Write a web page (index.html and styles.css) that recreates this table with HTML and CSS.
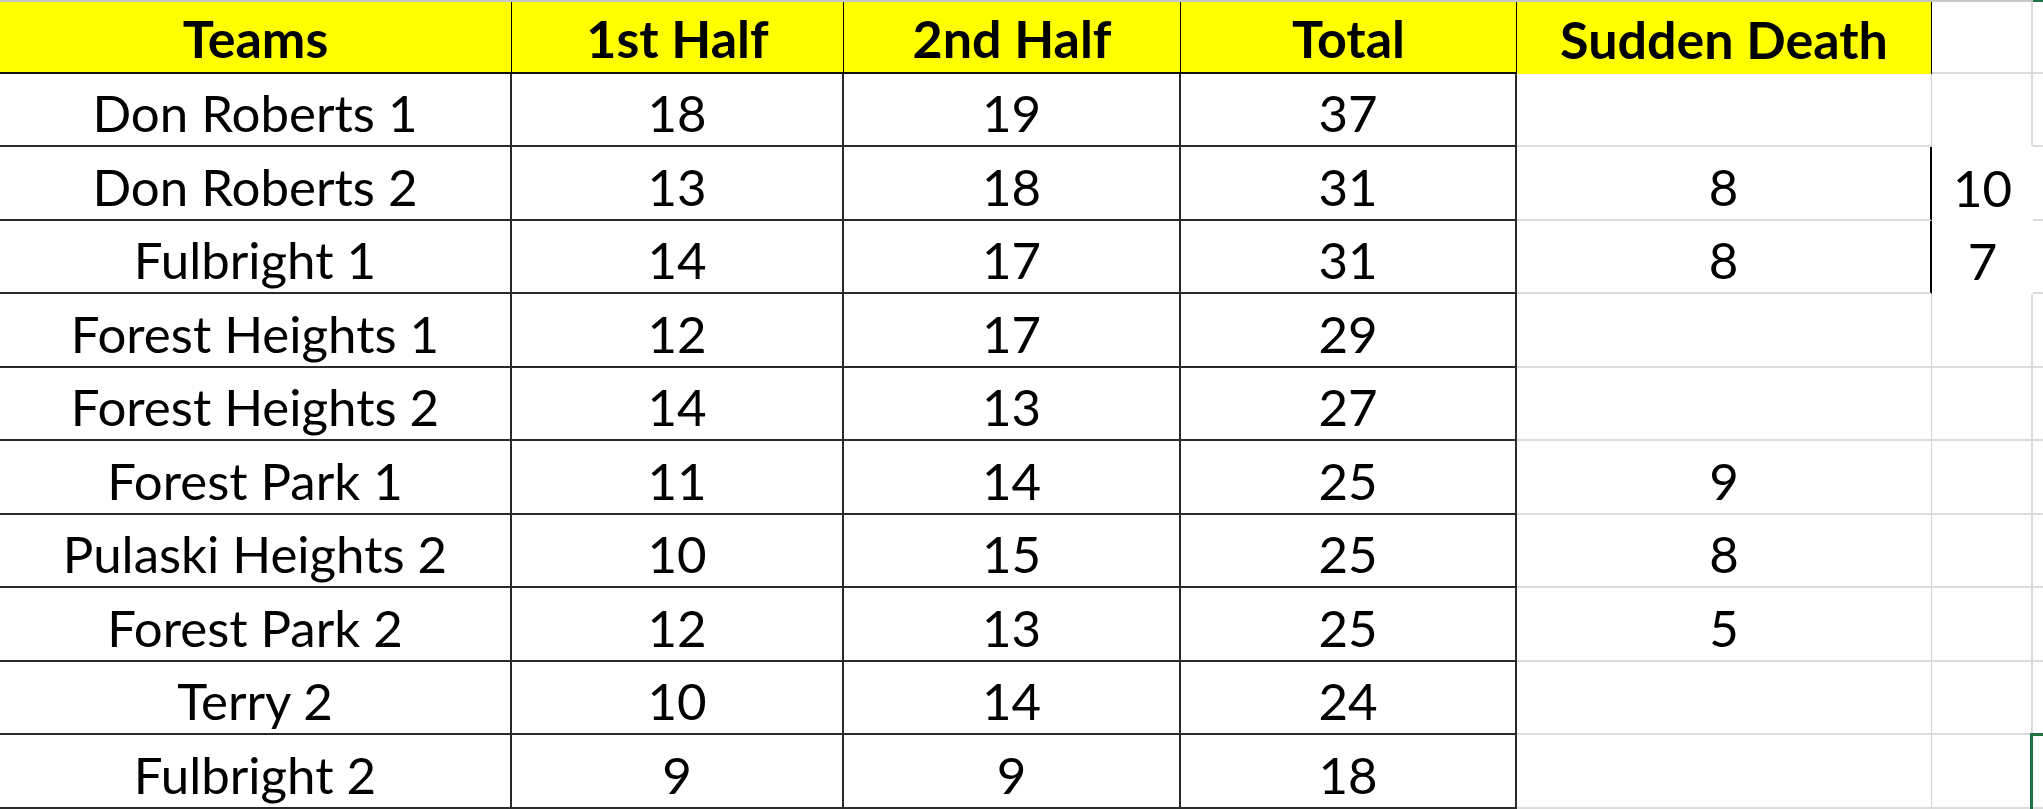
FILE: index.html
```html
<!DOCTYPE html>
<html>
<head>
<meta charset="utf-8">
<link rel="stylesheet" href="styles.css">
</head>
<body>
<div class="colbar"><div class="colbar-gray"></div><div class="colbar-green"></div></div>
<div class="sheet">
  <div class="c h b">Teams</div><div class="c h b">1st Half</div><div class="c h b">2nd Half</div><div class="c h b">Total</div><div class="c h hs">Sudden Death</div><div class="c ex">&nbsp;</div><div class="c ed"></div>

  <div class="c b">Don Roberts 1</div><div class="c b">18</div><div class="c b">19</div><div class="c b">37</div><div class="c sd"></div><div class="c ex exn"></div><div class="c ed"></div>
  <div class="c b">Don Roberts 2</div><div class="c b">13</div><div class="c b">18</div><div class="c b">31</div><div class="c sd sdx">8</div><div class="c exf">10</div><div class="c ed"></div>
  <div class="c b">Fulbright 1</div><div class="c b">14</div><div class="c b">17</div><div class="c b">31</div><div class="c sd sdx">8</div><div class="c exf">7</div><div class="c ed"></div>
  <div class="c b">Forest Heights 1</div><div class="c b">12</div><div class="c b">17</div><div class="c b">29</div><div class="c sd"></div><div class="c ex"></div><div class="c ed"></div>
  <div class="c b">Forest Heights 2</div><div class="c b">14</div><div class="c b">13</div><div class="c b">27</div><div class="c sd"></div><div class="c ex"></div><div class="c ed"></div>
  <div class="c b">Forest Park 1</div><div class="c b">11</div><div class="c b">14</div><div class="c b">25</div><div class="c sd">9</div><div class="c ex"></div><div class="c ed"></div>
  <div class="c b">Pulaski Heights 2</div><div class="c b">10</div><div class="c b">15</div><div class="c b">25</div><div class="c sd">8</div><div class="c ex"></div><div class="c ed"></div>
  <div class="c b">Forest Park 2</div><div class="c b">12</div><div class="c b">13</div><div class="c b">25</div><div class="c sd">5</div><div class="c ex"></div><div class="c ed"></div>
  <div class="c b">Terry 2</div><div class="c b">10</div><div class="c b">14</div><div class="c b">24</div><div class="c sd"></div><div class="c ex"></div><div class="c ed"></div>
  <div class="c b">Fulbright 2</div><div class="c b">9</div><div class="c b">9</div><div class="c b">18</div><div class="c sd"></div><div class="c ex"></div><div class="c ed sel"></div>
</div>
</body>
</html>
```

FILE: styles.css
```css
html, body {
  margin: 0;
  padding: 0;
  background: #ffffff;
}
body {
  width: 2043px;
  height: 809px;
  overflow: hidden;
  font-family: Lato, "Open Sans", sans-serif;
  color: #000;
}
.colbar {
  display: flex;
  height: 2px;
}
.colbar-gray {
  flex: 1;
  background: #c6c6c6;
}
.colbar-green {
  width: 10px;
  background: #217346;
}
.sheet {
  display: grid;
  grid-template-columns: 512px 332px 337px 336px 415px 101px 10px;
  grid-template-rows: 72px 73px 74px 73px 74px 73px 74px 73px 74px 73px 74px;
}
.c {
  box-sizing: border-box;
  display: flex;
  align-items: center;
  justify-content: center;
  padding-top: 6px;
  font-size: 51px;
  line-height: 1;
  white-space: nowrap;
  overflow: visible;
}
.h {
  background: #ffff00;
  font-size: 52px;
  font-weight: 700;
  padding-top: 2px;
}
.b {
  border-right: 2px solid #2a2a2a;
  border-bottom: 2px solid #2a2a2a;
}
.h.b {
  border-right: 1px solid #000;
  border-bottom: 2px solid #111;
}
.hs {
  border-right: 1px solid #000;
}
.sd {
  border-right: 1px solid #d0d0d0;
  border-bottom: 2px solid #dcdcdc;
}
.sdx {
  border-right: 2px solid #000;
}
.ex {
  border-right: 2px solid #dcdcdc;
  border-bottom: 2px solid #dcdcdc;
}
.exn {
  border-bottom: 2px solid transparent;
}
.exf {
  background: #fff;
}
.ed {
  border-bottom: 2px solid #dcdcdc;
  position: relative;
}
.sel::after {
  content: "";
  position: absolute;
  top: -2px;
  left: -3px;
  right: -2px;
  bottom: -2px;
  border-top: 3px solid #217346;
  border-left: 3px solid #217346;
}
```
